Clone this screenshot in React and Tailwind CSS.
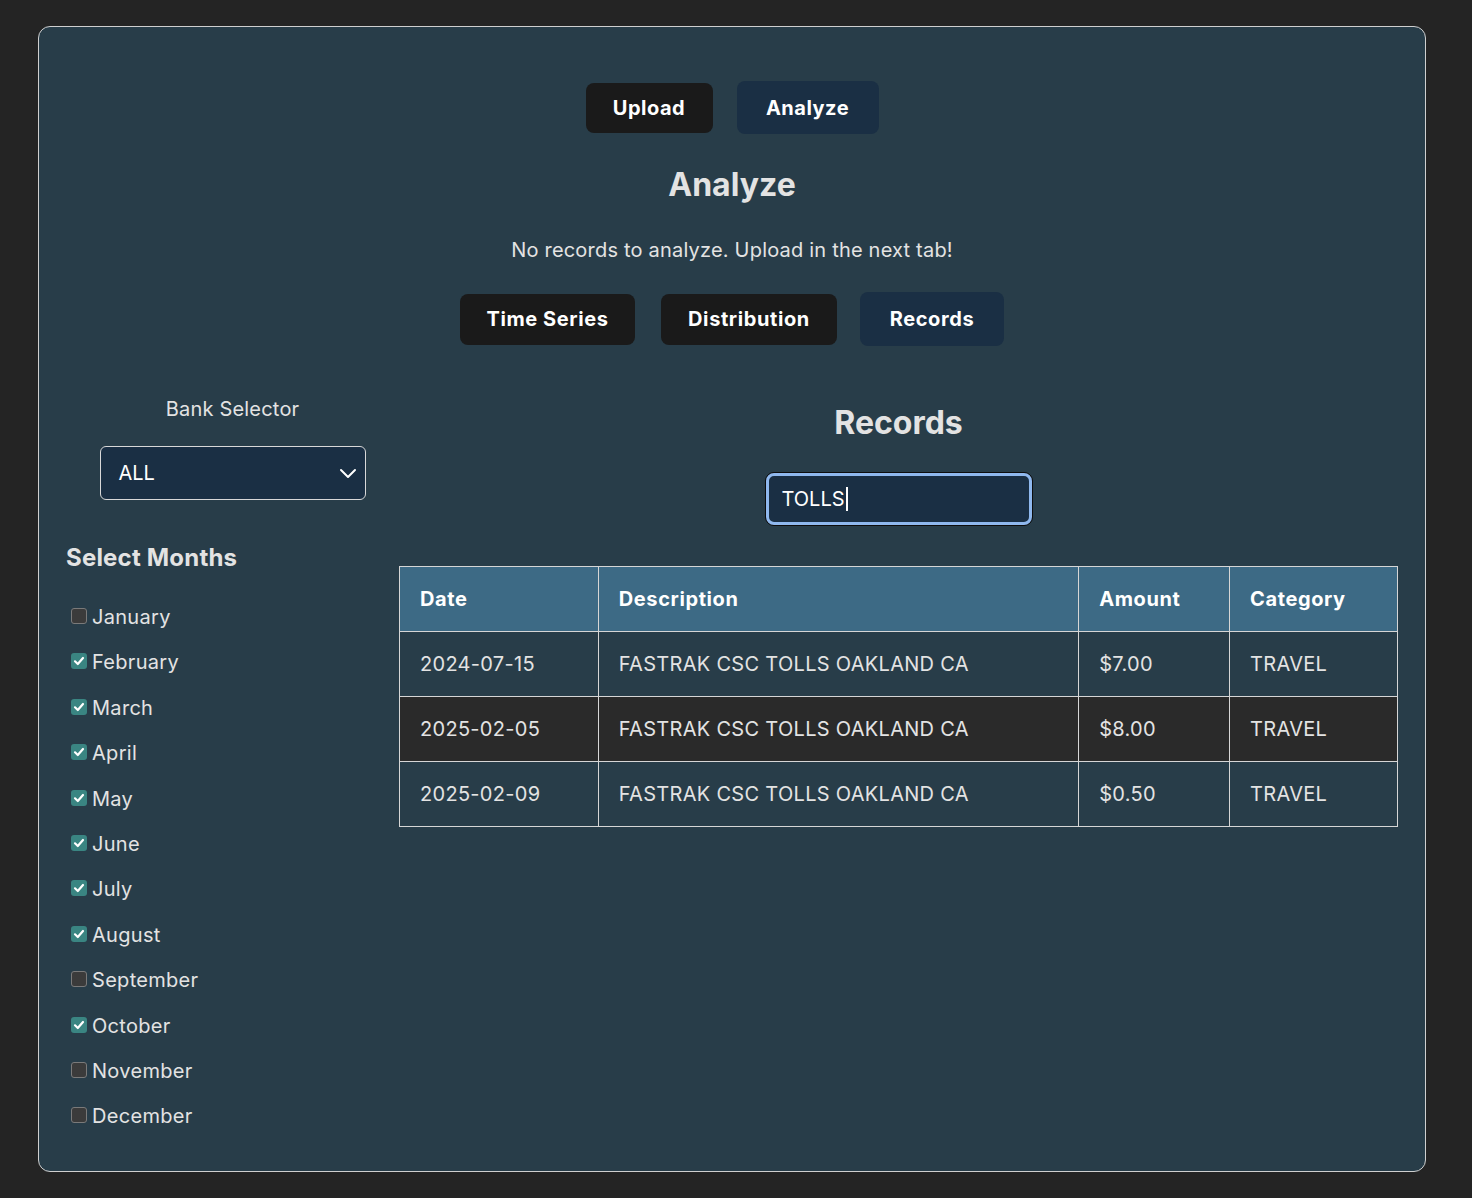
import React from "react";

const months = [
  ["January", false],
  ["February", true],
  ["March", true],
  ["April", true],
  ["May", true],
  ["June", true],
  ["July", true],
  ["August", true],
  ["September", false],
  ["October", true],
  ["November", false],
  ["December", false],
];

const rows = [
  ["2024-07-15", "FASTRAK CSC TOLLS OAKLAND CA", "$7.00", "TRAVEL", "bg-[#283d49]"],
  ["2025-02-05", "FASTRAK CSC TOLLS OAKLAND CA", "$8.00", "TRAVEL", "bg-[#2a2a2a]"],
  ["2025-02-09", "FASTRAK CSC TOLLS OAKLAND CA", "$0.50", "TRAVEL", "bg-[#283d49]"],
];

function Check({ on }) {
  return on ? (
    <span className="mt-[5px] ml-[5px] mr-[5px] flex h-[16px] w-[16px] shrink-0 items-center justify-center rounded-[3px] bg-[#3a8582]">
      <svg width="12" height="12" viewBox="0 0 12 12">
        <path d="M2 6.3 L4.8 9 L10 3" fill="none" stroke="white" strokeWidth="2.2" strokeLinecap="round" strokeLinejoin="round" />
      </svg>
    </span>
  ) : (
    <span className="mt-[5px] ml-[5px] mr-[5px] h-[16px] w-[16px] shrink-0 rounded-[3px] border border-[#7a7a7a] bg-[#3b3b3b]" />
  );
}

export default function App() {
  return (
    <div className="min-h-screen bg-[#242424] pt-[26px] pb-[26px] font-['Inter',sans-serif] text-[#e3e3e3]">
      <div className="ml-[38px] w-[1388px] rounded-[12px] border border-[#cfcfcf] bg-[#283d49] px-[27px] pt-[54px] pb-[41px]">
        <div className="flex items-center justify-center gap-[24px]">
          <button className="h-[50px] w-[127px] rounded-[8px] bg-[#1a1a1a] text-[20px] font-bold tracking-[0.5px] text-white">Upload</button>
          <button className="h-[53px] w-[142px] rounded-[8px] bg-[#1a2f44] text-[20px] font-bold tracking-[0.5px] text-white">Analyze</button>
        </div>
        <h1 className="mt-[31px] text-center text-[32px] font-bold leading-[40px] text-[#e3e3e3]">Analyze</h1>
        <p className="mt-[31px] text-center text-[20px] leading-[28px] tracking-[0.2px]">No records to analyze. Upload in the next tab!</p>
        <div className="mt-[28px] flex items-center justify-center">
          <button className="h-[51px] w-[175px] rounded-[8px] bg-[#1a1a1a] text-[20px] font-bold tracking-[0.6px] text-white">Time Series</button>
          <button className="ml-[26px] h-[51px] w-[176px] rounded-[8px] bg-[#1a1a1a] text-[20px] font-bold tracking-[0.6px] text-white">Distribution</button>
          <button className="ml-[23px] h-[54px] w-[144px] rounded-[8px] bg-[#1a2f44] text-[20px] font-bold tracking-[0.6px] text-white">Records</button>
        </div>

        <div className="mt-[40px] flex">
          <div className="w-[333px] shrink-0 pt-[9px]">
            <div className="text-center text-[20px] leading-[28px] tracking-[0.2px]">Bank Selector</div>
            <div className="mx-auto mt-[23px] flex h-[54px] w-[266px] items-center justify-between rounded-[6px] border border-[#d8d8d8] bg-[#1a2f44] pl-[18px] pr-[7px]">
              <span className="text-[20px] text-white">ALL</span>
              <svg width="20" height="20" viewBox="0 0 20 20">
                <path d="M3 7 L10 14 L17 7" fill="none" stroke="white" strokeWidth="2" strokeLinecap="round" strokeLinejoin="round" />
              </svg>
            </div>
            <h2 className="mt-[43px] text-[24px] font-bold leading-[30px] tracking-[0.2px]">Select Months</h2>
            <div className="mt-[30px] flex flex-col gap-[17.4px]">
              {months.map(([m, on]) => (
                <label key={m} className="flex h-[28px] items-start text-[20px] leading-[28px] tracking-[0.3px]">
                  <Check on={on} />
                  <span>{m}</span>
                </label>
              ))}
            </div>
          </div>

          <div className="flex-1 pt-[17px]">
            <h2 className="text-center text-[32px] font-bold leading-[40px]">Records</h2>
            <div className="mt-[29px] flex justify-center">
              <div className="flex h-[54px] w-[268px] items-center rounded-[9px] border border-[#0d0d0d] bg-[#0d0d0d] p-0">
                <div className="flex h-full w-full items-center rounded-[8px] border-[3px] border-[#8fb8ee] bg-[#1a2f44] pl-[13px]">
                  <span className="text-[20px] text-white">TOLLS</span>
                  <span className="ml-[1px] h-[24px] w-[2px] bg-white" />
                </div>
              </div>
            </div>
            <table className="mt-[40px] w-[999px] border-collapse text-[20px]">
              <colgroup>
                <col className="w-[199px]" />
                <col className="w-[481px]" />
                <col className="w-[151px]" />
                <col className="w-[168px]" />
              </colgroup>
              <thead>
                <tr className="h-[65px] bg-[#3d6a85]">
                  {["Date", "Description", "Amount", "Category"].map((h) => (
                    <th key={h} className="border border-[#d6d6d6] pl-[20px] text-left font-bold tracking-[0.6px] text-white">{h}</th>
                  ))}
                </tr>
              </thead>
              <tbody>
                {rows.map((r) => (
                  <tr key={r[0]} className={"h-[65px] " + r[4]}>
                    {r.slice(0, 4).map((c, i) => (
                      <td key={i} className="border border-[#d6d6d6] pl-[20px] tracking-[0.3px] text-[#e3e3e3]">{c}</td>
                    ))}
                  </tr>
                ))}
              </tbody>
            </table>
          </div>
        </div>
      </div>
    </div>
  );
}
